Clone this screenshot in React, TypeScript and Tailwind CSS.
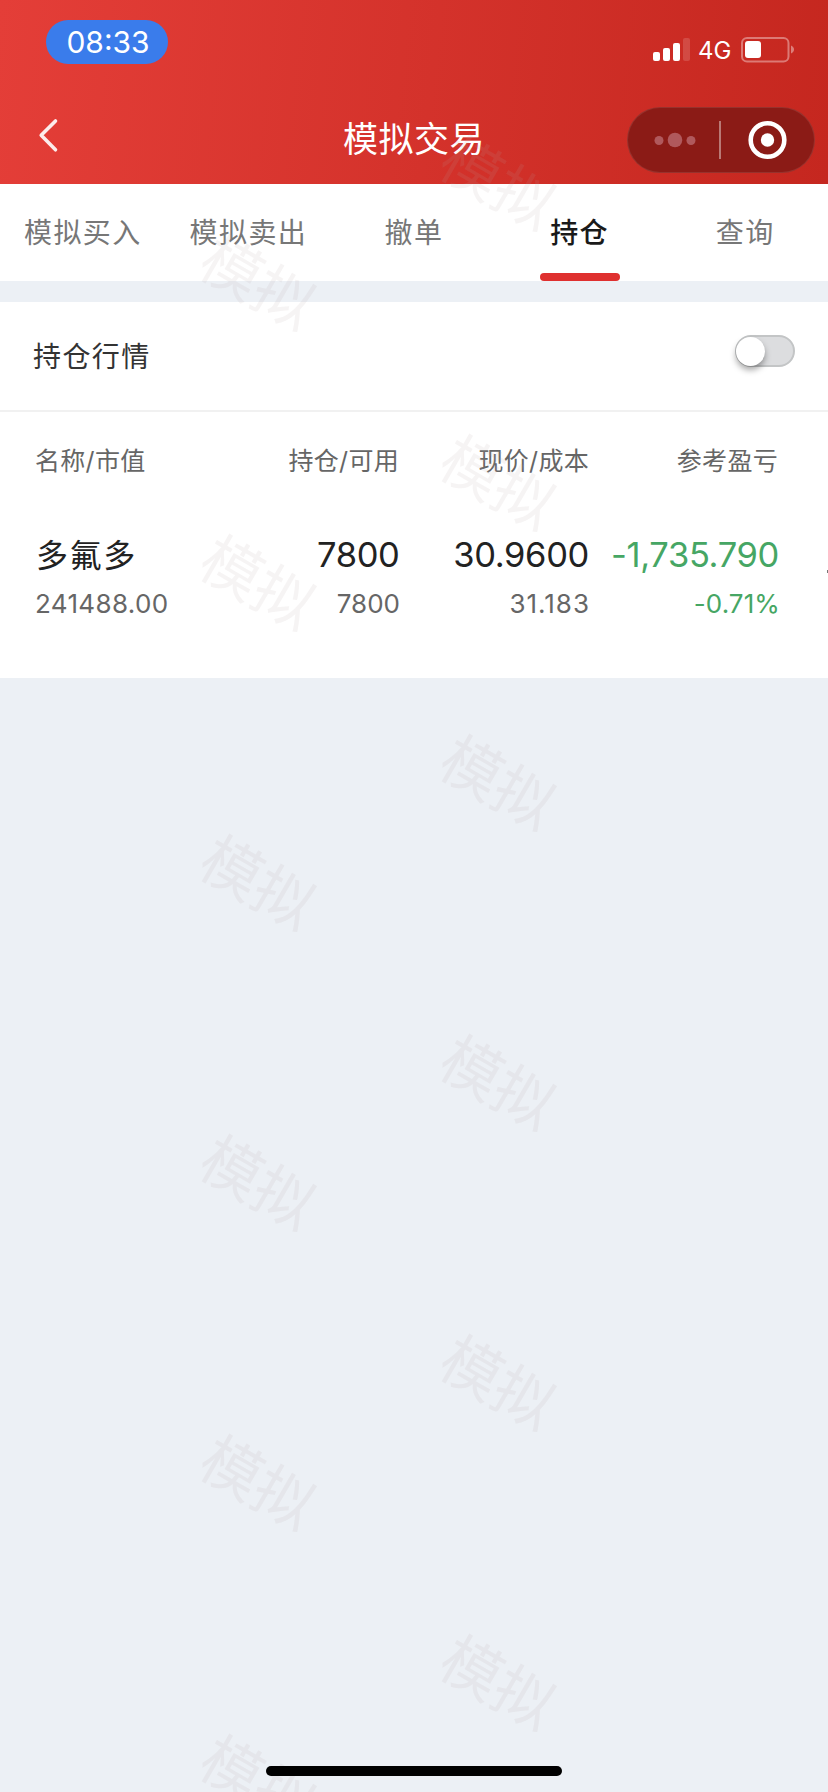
const TABS = ["模拟买入", "模拟卖出", "撤单", "持仓", "查询"];

const MARKS = [0, 1, 2, 3, 4, 5].flatMap((row) => [
  { x: 497.5, y: 183 + row * 300 },
  { x: 257.5, y: 283 + row * 300 },
]);

function StatusBar() {
  return (
    <div className="flex h-[88px] items-start justify-between pl-[46px] pr-[32px]">
      <div className="mt-[20px] flex h-[44px] w-[122px] items-center justify-center rounded-full bg-[#3a7ceb] pl-[2px] text-[30px] text-white">
        08:33
      </div>
      <div className="mt-[36px] flex h-[28px] items-center text-white">
        <svg width="38" height="28" viewBox="0 0 38 28" fill="currentColor">
          <rect x="0" y="16" width="7" height="9" rx="2" />
          <rect x="10" y="12" width="7" height="13" rx="2" />
          <rect x="20" y="7" width="7" height="18" rx="2" />
          <rect x="30" y="2" width="7" height="23" rx="2" opacity="0.15" />
        </svg>
        <span className="ml-[7px] mt-px w-[34px] whitespace-nowrap text-[24px] leading-[28px]">4G</span>
        <svg className="ml-[9px]" width="55" height="28" viewBox="0 0 55 28" fill="none">
          <rect x="1" y="2" width="46.500" height="23.500" rx="5" stroke="white" strokeOpacity="0.38" strokeWidth="2" />
          <rect x="4" y="5" width="16" height="17" rx="3" fill="white" />
          <path d="M50 9.500c4 1.500 4 6.500 0 8z" fill="white" fillOpacity="0.4" />
        </svg>
      </div>
    </div>
  );
}

function Header() {
  return (
    <header className="h-[184px] bg-[linear-gradient(96deg,#e43e38_0%,#c5271f_100%)]">
      <StatusBar />
      <div className="grid h-[96px] grid-cols-[1fr_auto_1fr] items-start">
        <svg className="ml-[37px] mt-[29px]" width="24" height="36" viewBox="0 0 24 36" fill="none">
          <path d="M18.500 4 4.200 18.300l14.300 14.500" stroke="white" strokeOpacity="0.9" strokeWidth="3.600" strokeLinecap="round" strokeLinejoin="round" />
        </svg>
        <h1 className="mt-[26px] text-[35px] leading-[50px] tracking-[0.500px] text-white">模拟交易</h1>
        <div className="mr-[13px] mt-[19px] flex h-[66px] w-[188px] items-center justify-self-end rounded-full border border-white/10 bg-[#8b1b16]">
          <svg width="186" height="64" viewBox="0 0 186 64" fill="none">
            <circle cx="31" cy="32.500" r="4.500" fill="#b0595c" />
            <circle cx="47" cy="32" r="7.300" fill="#b0595c" />
            <circle cx="63" cy="32.500" r="4.500" fill="#b0595c" />
            <path d="M92 13v38" stroke="#b97975" strokeWidth="2" />
            <circle cx="139.500" cy="32" r="16.800" stroke="white" strokeWidth="4.600" />
            <circle cx="139.500" cy="32" r="6.700" fill="white" />
          </svg>
        </div>
      </div>
    </header>
  );
}

function Tabs() {
  return (
    <nav className="grid h-[97px] grid-cols-5 bg-white">
      {TABS.map((tab) => {
        const active = tab === "持仓";
        return (
          <div key={tab} className="flex flex-col items-center justify-between">
            <span
              className={
                active
                  ? "mt-[29px] text-[28px] font-medium leading-[40px] tracking-[1.400px] text-[#1a1a1a]"
                  : "mt-[29px] text-[28px] leading-[40px] tracking-[1.400px] text-[#777]"
              }
            >
              {tab}
            </span>
            {active && <span className="h-[8px] w-[80px] rounded-full bg-[#df302f]" />}
          </div>
        );
      })}
    </nav>
  );
}

function QuoteSwitch() {
  return (
    <div className="flex h-[110px] items-start justify-between border-b-2 border-[#f1f1f1] pl-[33px] pr-[33px]">
      <span className="mt-[35px] text-[28px] leading-[40px] tracking-[1.400px] text-[#333]">持仓行情</span>
      <span className="mt-[33px] flex h-[32px] w-[60px] items-center rounded-full border-2 border-[#c3c5c6] bg-[#dcdddf]">
        <span className="-ml-px h-[29px] w-[29px] shrink-0 rounded-full bg-white shadow-[0_4px_6px_rgba(0,0,0,0.35)]" />
      </span>
    </div>
  );
}

function Holdings() {
  return (
    <div className="h-[266px] pl-[35px]">
      <div className="grid h-[102px] grid-cols-[175px_189px_190px_189px] whitespace-nowrap pt-[31px] text-[25px] leading-[36px] tracking-[0.300px] text-[#666]">
        <span>名称/市值</span>
        <span className="text-right">持仓/可用</span>
        <span className="text-right">现价/成本</span>
        <span className="text-right">参考盈亏</span>
      </div>
      <div className="grid grid-cols-[175px_189.500px_189.500px_190px_49px] whitespace-nowrap text-[34.500px] leading-[50px] tracking-[-0.350px] text-[#222]">
        <span className="pl-px pt-[17px] text-[32px] tracking-[1.600px]">多氟多</span>
        <span className="flex justify-end pt-[16px]">7800</span>
        <span className="flex justify-end pt-[16px]">30.9600</span>
        <span className="flex justify-end pt-[16px] text-[#46a664]">-1,735.790</span>
        <span className="mt-[56px] h-[3px] w-px justify-self-end bg-[#777]" />
      </div>
      <div className="grid grid-cols-[175px_190px_190px_190px] whitespace-nowrap text-[26px] leading-[36px] text-[#666]">
        <span className="pt-[5px] tracking-[0.350px]">241488.00</span>
        <span className="pt-[5px] text-right">7800</span>
        <span className="pt-[5px] text-right tracking-[1px]">31.183</span>
        <span className="pt-[5px] text-right tracking-[0.100px] text-[#46a664]">-0.71%</span>
      </div>
    </div>
  );
}

function Watermarks() {
  return (
    <div className="pointer-events-none absolute inset-0 overflow-hidden">
      {MARKS.map((m) => (
        <span
          key={`${m.x}-${m.y}`}
          className="absolute -translate-x-1/2 -translate-y-1/2 rotate-30 whitespace-nowrap text-[60px] leading-[60px] text-[#b4a8a8]/12"
          style={{ left: m.x, top: m.y }}
        >
          模拟
        </span>
      ))}
    </div>
  );
}

export default function App() {
  return (
    <div className="relative flex h-[1792px] w-[828px] flex-col overflow-hidden bg-[#ecf0f5] font-[Inter,'Noto_Sans_CJK_SC',sans-serif]">
      <Header />
      <Tabs />
      <main className="mt-[21px] bg-white">
        <QuoteSwitch />
        <Holdings />
      </main>
      <Watermarks />
      <div className="relative mb-[16px] mt-auto h-[10px] w-[296px] self-center rounded-full bg-black" />
    </div>
  );
}
